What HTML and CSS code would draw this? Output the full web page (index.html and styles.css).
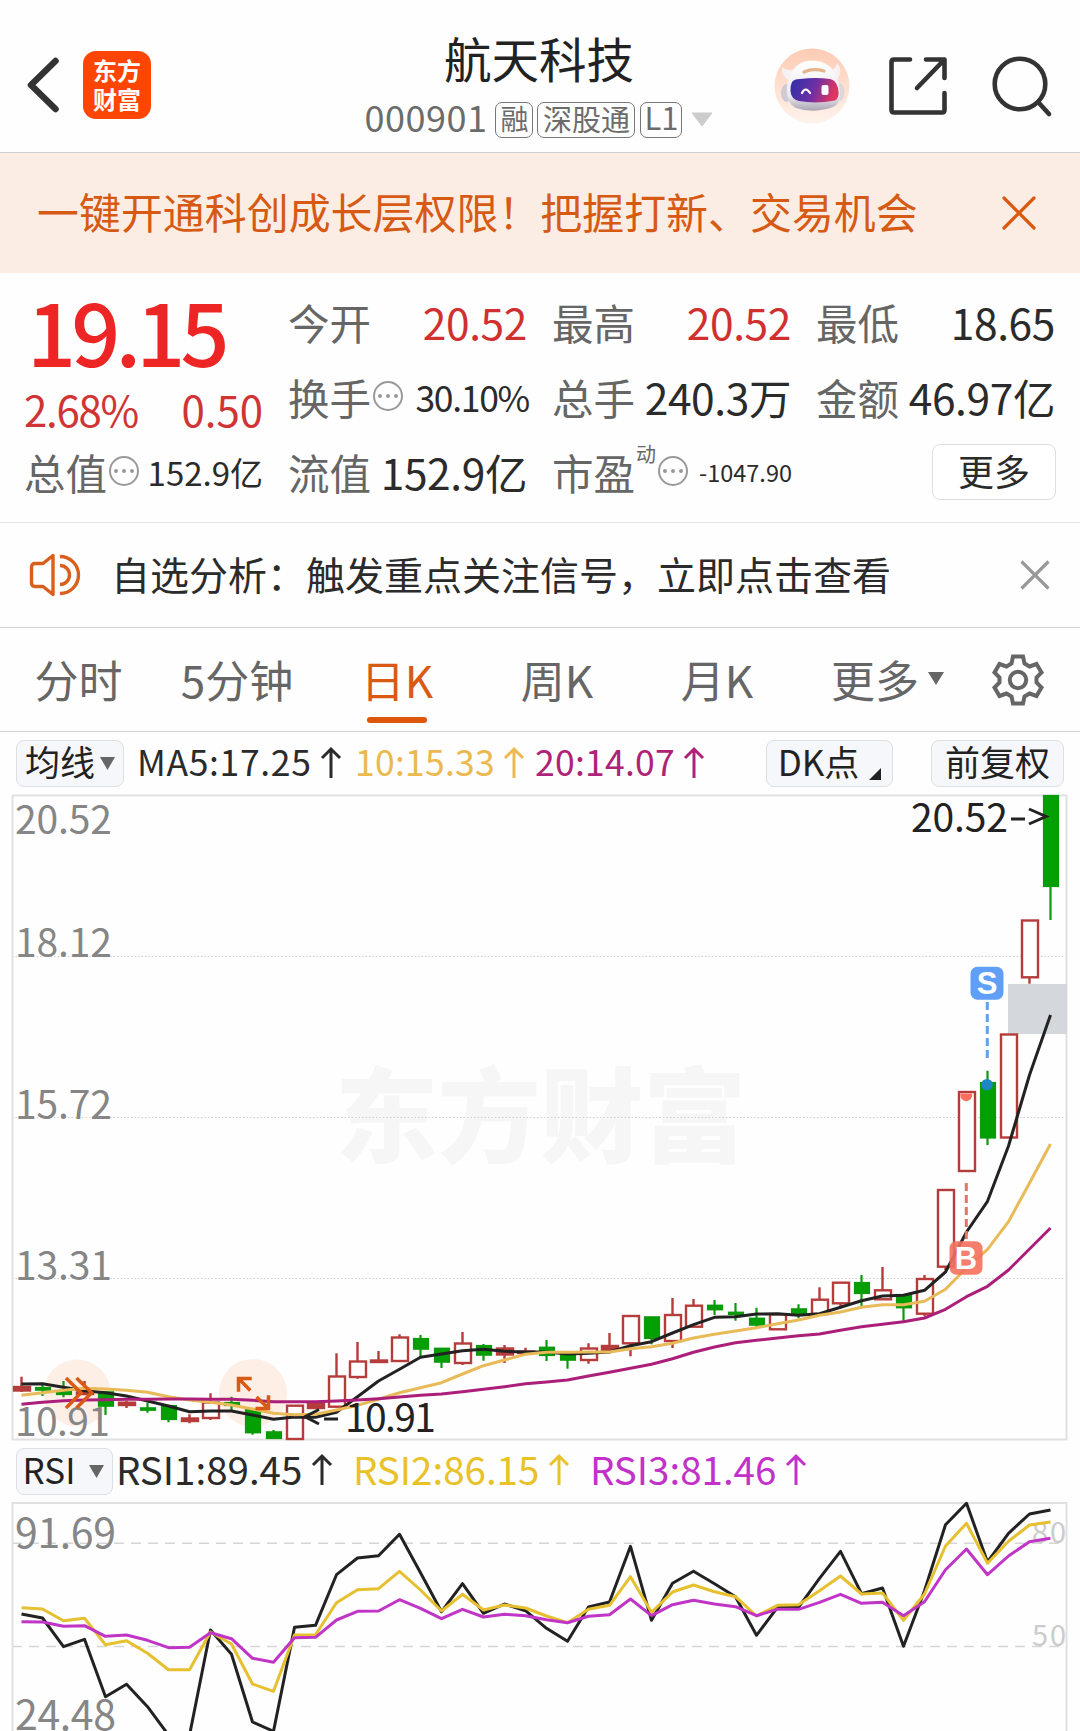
FILE: index.html
```html
<!DOCTYPE html>
<html lang="zh-CN">
<head>
<meta charset="utf-8">
<title>航天科技 000901</title>
<link rel="stylesheet" href="styles.css">
</head>
<body>
<header class="header">
  <div class="header-left">
    <svg class="back" width="36" height="64" viewBox="0 0 36 64"><path d="M30.500 8 6 32 30.500 56" fill="none" stroke="#333" stroke-width="6.500" stroke-linecap="round" stroke-linejoin="round"/></svg>
    <div class="logo"><span>东方</span><span>财富</span></div>
  </div>
  <div class="header-title">
    <h1>航天科技</h1>
    <div class="sub">
      <span class="code">000901</span>
      <span class="tag">融</span>
      <span class="tag tag-wide">深股通</span>
      <span class="tag tag-l1">L1</span>
      <svg class="sub-arrow" width="22" height="15" viewBox="0 0 22 15"><path d="M1 1h20L11 14z" fill="#ccc" stroke="#ccc" stroke-linejoin="round"/></svg>
    </div>
  </div>
  <div class="header-right">
    <svg width="76" height="78" viewBox="0 0 76 78">
      <defs>
        <linearGradient id="halo" x1="0" y1="0" x2="0" y2="1"><stop offset="0" stop-color="#fdcbb3"/><stop offset="1" stop-color="#fff3ed"/></linearGradient>
        <linearGradient id="visor" x1="0" y1="0" x2="1" y2="0.200"><stop offset="0" stop-color="#2b2fa8"/><stop offset=".55" stop-color="#6d2fa6"/><stop offset="1" stop-color="#e0355f"/></linearGradient>
        <linearGradient id="shell" x1="0" y1="0" x2="0" y2="1"><stop offset="0" stop-color="#fff"/><stop offset=".7" stop-color="#ece9ee"/><stop offset="1" stop-color="#a9a5b4"/></linearGradient>
      </defs>
      <circle cx="38" cy="39" r="37.500" fill="url(#halo)"/>
      <path d="M8 20q5 4 12 3l-5 10q-8-3-7-13zM63 16q6 7 1 16l-8-8q6-2 7-8z" fill="#f6f1f3"/>
      <ellipse cx="12.500" cy="46" rx="5.500" ry="9" fill="#cfcad5"/><ellipse cx="66" cy="45" rx="4.500" ry="9" fill="#ddd6dd"/>
      <path d="M13 40Q17 13.500 38 13.500Q60 13.500 65 38Q69 56 59 60Q39 67 22 61Q12 56 13 40z" fill="url(#shell)"/>
      <path d="M30 25Q39 21 50 24" fill="none" stroke="#e5b48c" stroke-width="3.200" stroke-linecap="round"/>
      <path d="M18 35Q20 32 26 32Q42 30 56 32Q62 33 64 41Q66 51 61 53.500Q42 57 25 54Q17 52 16.500 44Q16 39 18 35z" fill="url(#visor)"/>
      <path d="M28 46q3.500-7 8 0" fill="none" stroke="#fff" stroke-width="2.200" stroke-linecap="round"/>
      <rect x="47.500" y="38" width="7" height="10" rx="2" fill="#fff"/>
    </svg>
    <svg width="60" height="60" viewBox="0 0 60 60" fill="none" stroke="#333" stroke-width="4.600" stroke-linecap="round" stroke-linejoin="round"><path d="M22 3.500H6Q3.500 3.500 3.500 6V54Q3.500 56.500 6 56.500H54Q56.500 56.500 56.500 54V37M38 3.500H56.500V22M56 4 29 32"/></svg>
    <svg width="62" height="62" viewBox="0 0 62 62" fill="none" stroke="#333" stroke-width="4.600" stroke-linecap="round"><circle cx="30" cy="29" r="25.300"/><path d="M49 48 59 59"/></svg>
  </div>
</header>

<section class="banner">
  <p>一键开通科创成长层权限！把握打新、交易机会</p>
  <svg width="34" height="34" viewBox="0 0 34 34"><path d="M2 2 32 32M32 2 2 32" stroke="#d9590f" stroke-width="3.200" stroke-linecap="round"/></svg>
</section>

<section class="quote">
  <div class="price">
    <strong>19.15</strong>
    <div class="change"><span class="pct">2.68%</span><span class="chg">0.50</span></div>
  </div>
  <div class="item"><label>今开</label><b class="red">20.52</b></div>
  <div class="item"><label>最高</label><b class="red">20.52</b></div>
  <div class="item"><label>最低</label><b>18.65</b></div>
  <div class="item"><label>换手</label><i class="more"><u></u><u></u><u></u></i><b class="v-turn">30.10%</b></div>
  <div class="item"><label>总手</label><b>240.3万</b></div>
  <div class="item"><label>金额</label><b>46.97亿</b></div>
  <div class="item"><label>总值</label><i class="more"><u></u><u></u><u></u></i><b class="v-cap">152.9亿</b></div>
  <div class="item"><label>流值</label><b>152.9亿</b></div>
  <div class="item"><label>市盈</label><sup>动</sup><i class="more pe"><u></u><u></u><u></u></i><b class="v-pe">-1047.90</b></div>
  <div class="item item-btn"><button class="more-btn">更多</button></div>
</section>

<section class="notice">
  <svg width="52" height="44" viewBox="0 0 52 44" fill="none" stroke="#d9601c" stroke-width="3.400" stroke-linejoin="round"><path d="M24 2.500V41.500L14 33.500H6Q2.500 33.500 2.500 30V14Q2.500 10.500 6 10.500H14Z"/><path d="M31 3.500A18.500 18.500 0 0 1 31 40.500M31 12.500A9.500 9.500 0 0 1 31 31.500"/></svg>
  <p>自选分析：触发重点关注信号，立即点击查看</p>
  <svg class="notice-close" width="30" height="30" viewBox="0 0 30 30"><path d="M1.500 1.500 28.500 28.500M28.500 1.500 1.500 28.500" stroke="#999" stroke-width="3.200"/></svg>
</section>

<nav class="tabs">
  <span>分时</span><span>5分钟</span><span class="active">日K</span><span>周K</span><span>月K</span>
  <span class="tab-more">更多<svg width="16" height="13" viewBox="0 0 16 13"><path d="M0 0h16L8 13z" fill="#666"/></svg></span>
  <svg class="gear" width="52" height="52" viewBox="0 0 52 52" fill="none" stroke="#666" stroke-width="4"><path d="M21 2.500H31L32.500 9.500 37.500 12.500 44.500 10 49.500 18.500 44.500 23.500V28.500L49.500 33.500 44.500 42 37.500 39.500 32.500 42.500 31 49.500H21L19.500 42.500 14.500 39.500 7.500 42 2.500 33.500 7.500 28.500V23.500L2.500 18.500 7.500 10 14.500 12.500 19.500 9.500Z"/><circle cx="26" cy="26" r="8.200"/></svg>
</nav>

<div class="bar ma-bar">
  <button class="chip"><span>均线</span><svg width="15" height="13" viewBox="0 0 15 13"><path d="M0 0h15L7.500 13z" fill="#666"/></svg></button>
  <div class="ma ma5"><span>MA5:17.25</span><svg class="up" viewBox="0 0 20 32"><path d="M10 31V2M1 11 10 2 19 11"/></svg></div>
  <div class="ma ma10"><span>10:15.33</span><svg class="up" viewBox="0 0 20 32"><path d="M10 31V2M1 11 10 2 19 11"/></svg></div>
  <div class="ma ma20"><span>20:14.07</span><svg class="up" viewBox="0 0 20 32"><path d="M10 31V2M1 11 10 2 19 11"/></svg></div>
  <button class="chip chip-dk"><span>DK点</span><svg width="12" height="12" viewBox="0 0 12 12"><path d="M12 0V12H0z" fill="#222"/></svg></button>
  <button class="chip chip-fq"><span>前复权</span></button>
</div>

<svg class="kline" width="1080" height="646" viewBox="0 794 1080 646">
  <text class="watermark" x="335" y="1155" textLength="411">东方财富</text>
  <g class="dotted"><path d="M12 956.500H1067M12 1117.500H1067M12 1278.500H1067"/></g>
  <rect class="frame" x="12.500" y="795.500" width="1054" height="644"/>
  <rect x="1008" y="984" width="59" height="50" fill="#d4d7dc"/>
  <g class="axis">
    <text x="15" y="833.500" textLength="97">20.52</text>
    <text x="15" y="957" textLength="97">18.12</text>
    <text x="15" y="1118.500" textLength="97">15.72</text>
    <text x="15" y="1279.500" textLength="97">13.31</text>
  </g>
  <circle class="tool" cx="77" cy="1393" r="33.500"/>
  <circle class="tool" cx="253" cy="1393" r="34"/>
  <text class="axis-low" x="15" y="1435.500" textLength="95">10.91</text>
  <g id="candles"></g>
  <g id="ma" class="lines"></g>
  <g class="marks">
    <path d="M987.300 1002V1058" stroke="#68a0e6" stroke-width="3" stroke-dasharray="8 4"/>
    <path d="M966.300 1183V1239" stroke="#de7767" stroke-width="3" stroke-dasharray="8 4"/>
    <path d="M960.500 1093.500H972A6 6 0 1 1 960.500 1093.500Z" fill="#fb6f60"/>
    <circle cx="987" cy="1084.700" r="5.800" fill="#1e86c4"/>
    <rect x="970.500" y="966.800" width="33" height="33" rx="7" fill="#5f9ff8"/>
    <rect x="949.500" y="1241.300" width="33" height="33.400" rx="7" fill="#f4705d" opacity=".9"/>
    <text x="987" y="994" text-anchor="middle">S</text>
    <text x="966" y="1268.500" text-anchor="middle">B</text>
  </g>
  <g class="tool-icons">
    <path d="M66 1378 81 1392.700 66 1408M76.500 1378 91.600 1392.700 76.500 1408"/>
    <path d="M251.700 1378.500H238.500V1391.700M238.500 1378.500 250.300 1390.500M255.500 1408.500H268.500V1395.300M268.500 1408.500 256.500 1397"/>
  </g>
  <g class="callout">
    <text x="911" y="832" textLength="97">20.52</text><path d="M1011 819H1025M1029 809 1046 816.500 1029 824"/>
    <text x="345" y="1431.500" textLength="91">10.91</text><path d="M324 1419H338M319 1409.500 305 1416.700 319 1424"/>
  </g>
</svg>

<div class="bar rsi-bar">
  <button class="chip chip-rsi"><span>RSI</span><svg width="15" height="13" viewBox="0 0 15 13"><path d="M0 0h15L7.500 13z" fill="#666"/></svg></button>
  <div class="rsi rsi1"><span>RSI1:89.45</span><svg class="up" viewBox="0 0 20 32"><path d="M10 31V2M1 11 10 2 19 11"/></svg></div>
  <div class="rsi rsi2"><span>RSI2:86.15</span><svg class="up" viewBox="0 0 20 32"><path d="M10 31V2M1 11 10 2 19 11"/></svg></div>
  <div class="rsi rsi3"><span>RSI3:81.46</span><svg class="up" viewBox="0 0 20 32"><path d="M10 31V2M1 11 10 2 19 11"/></svg></div>
</div>

<svg class="rsi-chart" width="1080" height="229" viewBox="0 1502 1080 229">
  <path class="dashed" d="M12 1543.200H1067M12 1646.500H1067"/>
  <path class="frame" d="M12.500 1740V1503H1066.500V1740"/>
  <g class="axis big">
    <text x="15" y="1548" textLength="101">91.69</text>
    <text x="15" y="1730" textLength="101">24.48</text>
  </g>
  <g class="levels"><text x="1032" y="1542.500" textLength="34">80</text><text x="1032" y="1646" textLength="34">50</text></g>
  <g id="rsi" class="lines"></g>
</svg>
<script src="chart.js"></script>
</body>
</html>
```

FILE: styles.css
```css
* { box-sizing: border-box; }
body {
  margin: 0;
  width: 1080px;
  height: 1731px;
  overflow: hidden;
  background: #fefefe;
  color: #2b2b2b;
  font-family: "Noto Sans CJK SC", "Noto Sans", sans-serif;
  -webkit-font-smoothing: antialiased;
}
svg { display: block; flex: none; overflow: visible; }
p, h1 { margin: 0; font-weight: 400; white-space: nowrap; }
button { font: inherit; color: inherit; margin: 0; padding: 0; }

.header {
  height: 153px;
  border-bottom: 1px solid #cfcfcf;
  display: grid;
  grid-template-columns: 300px 478px 302px;
}
.header-left { display: flex; align-items: center; padding: 18px 0 0 25px; gap: 22px; }
.logo {
  width: 68px; height: 68px; border-radius: 13px; background: #fe4503; color: #fff;
  display: flex; flex-direction: column; align-items: center; justify-content: center;
  font: 700 24px/29px "Noto Sans CJK SC", sans-serif; padding-bottom: 3px;
}
.header-title { display: flex; flex-direction: column; align-items: center; padding-top: 27px; }
.header-title h1 { font-size: 47.500px; line-height: 62px; color: #222; }
.sub { display: flex; align-items: center; gap: 5px; margin-top: 12px; height: 37px; color: #6c6c6c; }
.code { font-size: 36px; line-height: 36px; margin: -7px 3px 0 0; letter-spacing: 0.5px; }
.tag {
  width: 38px; height: 36px; border: 1.500px solid #777; border-radius: 7px;
  font-size: 28px; line-height: 30px; text-align: center;
}
.tag-wide { width: 98px; font-size: 29px; margin-left: -1px; }
.tag-l1 { width: 42px; font-size: 31px; line-height: 28px; }
.sub-arrow { margin-left: 4px; }
.header-right { display: flex; align-items: center; padding: 19px 28px 0 0; justify-content: flex-end; }
.header-right svg:nth-child(2) { margin-left: 38px; }
.header-right svg:nth-child(3) { margin-left: 42px; }

.banner {
  height: 120px; background: #fcede4; color: #d65a14;
  display: flex; align-items: center; justify-content: space-between; padding: 0 44px 0 37px;
}
.banner p { font-size: 41.950px; line-height: 60px; margin-top: -4px; }

.quote {
  height: 250px; border-bottom: 1px solid #e6e6e6; padding: 11px 24px 0 25px;
  display: grid; grid-template-columns: repeat(4, 238px); grid-template-rows: repeat(3, 75px); column-gap: 26px;
}
.price { grid-row: 1 / 3; color: #ee2525; }
.price strong { display: block; font-size: 86px; line-height: 88px; font-weight: 500; margin: 2px 0 0 2px; letter-spacing: -4.800px; }
.change { display: flex; justify-content: space-between; font-size: 42px; line-height: 60px; color: #d03434; margin: 5px 0 0 -1px; }
.pct { letter-spacing: -1.300px; }
.item { display: flex; align-items: center; white-space: nowrap; }
.item label { font-size: 41.500px; line-height: 60px; color: #666; margin-left: -1px; }
.item b { font-weight: 400; margin-left: auto; font-size: 42.500px; line-height: 60px; color: #2b2b2b; letter-spacing: -0.400px; }
.item b.red { color: #d03030; }
.more {
  width: 30px; height: 30px; border: 2.500px solid #999; border-radius: 50%;
  display: flex; align-items: center; justify-content: center; gap: 4px; margin-left: 2px; margin-top: -2px;
}
.more u { width: 4px; height: 4px; border-radius: 50%; background: #999; }
.item .v-turn { font-size: 35.500px; letter-spacing: -1.300px; margin-right: -2px; }
.item .v-cap { font-size: 33px; letter-spacing: 0; }
.item .v-pe { font-size: 23.500px; letter-spacing: 0; margin-right: -1px; }
.item sup { font-size: 20px; line-height: 24px; color: #666; align-self: flex-start; margin: 8px 0 0 1px; }
.more.pe { margin-left: 2px; }
.item-btn { justify-content: flex-end; }
.more-btn {
  width: 124px; height: 56px; border: 1.500px solid #dedede; border-radius: 8px; background: #fff;
  font-size: 36px; line-height: 44px; margin-right: -1px; padding-bottom: 4px;
}

.notice {
  height: 105px; border-bottom: 1px solid #d2d2d2; display: flex; align-items: center; padding: 0 30px 0 29px;
}
.notice p { font-size: 39px; line-height: 56px; margin: -5px 0 0 30px; }
.notice-close { margin-left: auto; margin-top: -1px; }

.tabs {
  height: 104px; border-bottom: 1px solid #d2d2d2; color: #666; font-size: 44px;
  display: grid; grid-template-columns: 157px 160px 160px 160px 160px 181px 78px; align-items: center; justify-items: center;
}
.tabs span { line-height: 64px; margin-top: -2px; position: relative; }
.tabs .active { color: #d95a14; }
.tabs .active::after {
  content: ""; position: absolute; left: 50%; bottom: -12px; width: 60px; height: 6px; margin-left: -30px;
  border-radius: 3px; background: #dd570c;
}
.tab-more { display: flex; align-items: center; gap: 9px; }
.gear { justify-self: center; margin-left: 2px; }

.bar { display: flex; align-items: center; padding-left: 16px; color: #2b2b2b; white-space: nowrap; }
.ma-bar, .rsi-bar { height: 62px; }
.bar span { margin-top: -4px; }
.chip {
  height: 47px; border: 1.500px solid #dcdfe4; border-radius: 8px; background: #f6f7fa; color: #222;
  display: flex; align-items: center; justify-content: center; font-size: 35px; line-height: 42px; flex: none;
  width: 108px; gap: 5px;
}
.chip-dk { width: 127px; margin-left: auto; gap: 10px; }
.chip-dk svg { align-self: flex-end; margin-bottom: 6px; }
.chip-fq { width: 133px; margin: 0 16px 0 38px; }
.chip-rsi { width: 97px; gap: 14px; padding-right: 2px; }
.up { width: 20px; height: 32px; fill: none; stroke: currentColor; stroke-width: 3; }
.ma, .rsi { display: flex; align-items: center; }
.ma { font-size: 35.500px; line-height: 50px; gap: 9px; }
.ma5 { margin-left: 13px; width: 218px; letter-spacing: 0.650px; }
.ma10 { color: #ebb94f; width: 180px; letter-spacing: 0.250px; }
.ma20 { color: #ae2378; letter-spacing: 0.250px; }
.rsi { font-size: 38.500px; line-height: 50px; gap: 10px; width: 237px; }
.rsi span { margin-top: -6px; }
.rsi .up { margin-top: -2px; }
.rsi1 { margin-left: 3px; }
.rsi2 { color: #e8c228; }
.rsi3 { color: #c232c8; }

.frame { fill: none; stroke: #e0e0e0; stroke-width: 2; }
.dotted { stroke: #cfcfcf; stroke-width: 1.200; stroke-dasharray: 1.500 2; }
.dashed { stroke: #d5d5d5; stroke-width: 1.500; stroke-dasharray: 10 7; fill: none; }
.watermark { font-size: 103px; font-weight: 900; fill: #f6f6f6; }
.axis, .axis-low { font-size: 39px; fill: #868686; }
.axis.big { font-size: 41px; }
.levels { font-size: 29px; fill: #ccc; }
.tool { fill: #fdeee6; }
.tool-icons { fill: none; stroke: #d95a14; stroke-width: 3.500; }
.marks text { font: 700 31px "Liberation Sans", sans-serif; fill: #fff; }
.callout { font-size: 39px; fill: #222; }
.callout path { fill: none; stroke: #222; stroke-width: 3; }
.lines path { fill: none; stroke-width: 3; stroke-linejoin: round; }
.up-candle { stroke: #b53c3a; stroke-width: 2.400; fill: #fff; }
.up-solid { stroke: #b53c3a; stroke-width: 2.400; fill: #b53c3a; }
.down-candle { stroke: #0a9a0a; stroke-width: 2.200; fill: #02a002; }
```

FILE: chart.js
```js
const NS = "http://www.w3.org/2000/svg";
const x = i => 21.5 + 21 * i;
function add(parent, tag, attrs) {
  const el = document.createElementNS(NS, tag);
  for (const k in attrs) el.setAttribute(k, attrs[k]);
  document.getElementById(parent).appendChild(el);
}
// kind (r: hollow up, s: solid up, g: down), high, body top, body bottom, low
const candles = [
  ["s",1376.7,1387,1390.5,1392],["g",1382.7,1388,1389.7,1396],["g",1381,1391.7,1394,1397.3],["s",1381,1392.5,1394,1395],
  ["g",1392.3,1392.3,1405.7,1415],["s",1400.7,1402.7,1405,1408],["g",1402.7,1408.3,1409.8,1412.7],["g",1406,1406,1419,1422.3],
  ["s",1414.3,1418.5,1421,1423.3],["r",1393.3,1402.5,1418,1420],["g",1396.7,1403,1405,1410],["g",1410,1410,1432.3,1434.7],
  ["g",1430,1432.3,1438,1439],["r",1405.7,1405.7,1439,1439],["s",1403,1403.3,1408,1408],["r",1353.3,1376.5,1406.7,1406.7],
  ["r",1342,1361.5,1377,1378.7],["s",1351,1360.5,1362,1363],["r",1334.3,1337.5,1361,1361],["g",1335,1339,1348.7,1356.7],
  ["g",1348.7,1348.7,1361.7,1368],["r",1332,1343.5,1363,1365],["g",1344,1346,1354.7,1360.7],["s",1345,1348.5,1354.5,1363],
  ["s",1347.7,1351.5,1353,1353.5],["g",1340,1347.7,1355,1361],["g",1355,1355,1359.7,1368.7],["r",1343.3,1348.5,1360,1363.7],
  ["s",1333,1346,1350,1350],["r",1316,1316,1343.3,1356.3],["g",1317.3,1317.3,1338,1344.3],["r",1298,1315,1341,1348],
  ["r",1299,1305.7,1326.7,1326.7],["g",1300,1305.7,1309.3,1315],["g",1303,1312.7,1314,1320.7],["g",1307.7,1318.7,1324.7,1326.7],
  ["r",1314.3,1314.3,1329.3,1329.3],["g",1304.3,1309.3,1313.3,1318.3],["r",1287.3,1299.7,1314,1314],["r",1282.7,1282.7,1303.3,1308.7],
  ["g",1275,1283,1293,1306.7],["r",1267,1290.3,1299.3,1299.3],["g",1295,1295,1307.3,1321.7],["r",1275,1279,1313.7,1316],
  ["r",1190,1190,1266.7,1270],["r",1092,1092,1171,1171],["g",1070.7,1083,1137.5,1145],["r",1034.5,1034.5,1137.5,1137.5],
  ["r",920.5,920.5,977.3,983.7],["g",796,796,886,920]
];
const cls = { r: "up-candle", s: "up-solid", g: "down-candle" };
candles.forEach(([kind, hi, top, bot, lo], i) => {
  const cx = x(i);
  add("candles", "path", { class: cls[kind], d: `M${cx} ${hi}V${top}M${cx} ${bot}V${lo}` });
  const half = kind === "g" ? 7 : 8;
  add("candles", "rect", { class: cls[kind], x: cx - half + 0.5, y: top, width: half * 2, height: Math.max(bot - top, 1) });
});
function line(parent, color, ys, base) {
  add(parent, "path", { stroke: color, d: "M" + ys.map((y, i) => `${x(i)} ${(base + y / 3).toFixed(1)}`).join("L") });
}
// offsets in thirds of a pixel below the base line
line("ma", "#222", [552,551,562,572,578,588,603,618,635,633,633,645,658,651,652,637,590,543,508,472,462,452,448,454,456,
  456,462,460,456,437,425,399,374,352,350,342,341,346,341,322,302,288,286,271,216,96,4,-162,-375,-555], 1200);
line("ma", "#e8ba58", [586,578,571,565,567,571,577,590,600,607,615,627,640,644,643,630,616,598,578,563,548,522,497,480,463,
  457,457,456,456,446,440,430,414,403,393,383,371,360,346,336,322,314,314,304,268,204,148,65,-51,-168], 1200);
line("ma", "#ab1f7a", [613,607,602,600,599,598,598,597,597,598,598,601,605,605,605,603,600,596,591,586,582,575,568,560,551,
  546,540,528,517,505,493,476,457,441,428,421,414,407,402,391,380,373,365,354,328,290,259,210,147,84], 1200);
line("rsi", "#222", [522,534,620,598,770,733,800,885,886,570,643,846,874,562,556,404,354,347,283,398,515,431,520,492,512,
  565,604,501,486,319,541,430,394,431,470,586,502,502,415,334,461,444,619,452,254,190,366,280,222,210], 1440);
line("rsi", "#e6c02e", [503,507,542,535,614,602,640,689,689,576,612,732,754,585,584,488,449,446,394,450,513,463,510,495,504,
  528,548,508,496,410,517,456,435,455,470,528,496,494,452,408,462,459,541,462,318,250,370,304,255,246], 1440);
line("rsi", "#c034c6", [545,546,559,557,589,585,601,623,622,578,596,655,667,593,592,540,514,513,479,505,536,508,531,523,527,
  539,548,529,524,477,527,494,481,492,500,527,508,508,487,463,490,487,527,485,389,327,404,348,305,295], 1440);
```
